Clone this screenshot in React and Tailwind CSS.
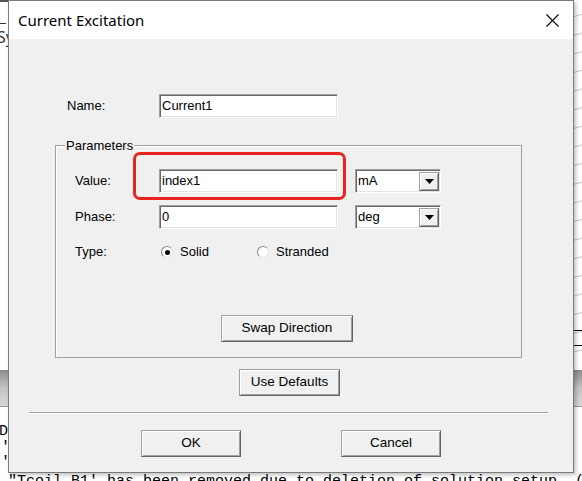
import React from 'react';

const sunken = 'bg-white border border-t-[#a0a0a0] border-l-[#a0a0a0] border-b-white border-r-white shadow-[inset_1px_1px_0_#696969,inset_-1px_-1px_0_#e3e3e3]';
const raised = 'bg-[#f0f0f0] border border-[#a0a0a0] border-r-[#646464] border-b-[#646464] shadow-[inset_1px_1px_0_#fff,inset_-1px_-1px_0_#a0a0a0]';

function TextBox({ value, width = 'w-[179px]' }) {
	return (
		<div className={`${sunken} ${width} h-[24px] flex items-center pl-[2px] text-[13px] text-black`}>
			{value}
		</div>
	);
}

function Combo({ value }) {
	return (
		<div className={`${sunken} w-[86px] h-[24px] flex items-center justify-between pl-[2px] pr-[1px]`}>
			<span className="text-[13px]">{value}</span>
			<div className={`${raised} w-[20px] h-[19px] flex items-center justify-center`}>
				<svg width="9" height="5" viewBox="0 0 9 5"><path d="M0 0h9L4.5 5z" fill="#000" /></svg>
			</div>
		</div>
	);
}

function Radio({ checked, label }) {
	return (
		<div className="flex items-center">
			<div className="w-[12px] h-[12px] rounded-full bg-white border border-[#8a8a8a] border-b-[#e3e3e3] border-r-[#e3e3e3] flex items-center justify-center">
				{checked && <div className="w-[5px] h-[5px] rounded-full bg-black" />}
			</div>
			<span className="ml-[7px] text-[13px]">{label}</span>
		</div>
	);
}

function Button({ children, width, height = 'h-[27px]' }) {
	return (
		<div className={`${raised} ${width} ${height} flex items-center justify-center text-[13.5px] text-black`}>
			{children}
		</div>
	);
}

export default function App() {
	return (
		<div className="relative w-[582px] h-[481px] overflow-hidden bg-white" style={{ fontFamily: '"Liberation Sans", Arial, sans-serif' }}>
			{/* backdrop: the main app behind the dialog */}
			<div className="absolute left-0 top-0 w-[582px] h-[2px] bg-[#555]" />
			<div className="absolute left-0 top-[23px] w-[6px] h-[1px] bg-[#333]" />
			<div className="absolute left-[-3px] top-[29px] text-[16px] leading-none text-[#333]" style={{ fontFamily: '"Noto Sans", sans-serif' }}>Sy</div>
			<div className="absolute right-0 top-0 w-[12px] h-[360px] bg-[repeating-linear-gradient(165deg,#fff_0px,#fff_16px,#c8c8c8_17px,#fff_18px)]" />
			<div className="absolute right-0 top-[330px] w-[12px] h-[1px] bg-black" />
			<div className="absolute right-0 top-[345px] w-[12px] h-[1px] bg-black" />
			<div className="absolute left-0 top-[370px] w-[582px] h-[36px] bg-gradient-to-b from-[#8c8c8c] via-[#c4c4c4] to-[#d8d8d8]" />
			<div className="absolute left-0 top-[406px] w-[582px] h-[1px] bg-[#999]" />
			<div className="absolute left-[-1px] top-[424px] text-[15px] leading-none" style={{ fontFamily: '"Liberation Mono", monospace' }}>De</div>
			<div className="absolute left-[1px] top-[440px] text-[15px] leading-none" style={{ fontFamily: '"Liberation Mono", monospace' }}>',</div>
			<div className="absolute left-[1px] top-[455px] text-[15px] leading-none" style={{ fontFamily: '"Liberation Mono", monospace' }}>',</div>
			<div className="absolute left-[8px] top-[474px] whitespace-nowrap text-[15px] leading-none" style={{ fontFamily: '"Liberation Mono", monospace' }}>
				"Tcoil_B1' has been removed due to deletion of solution setup. (Circuit
			</div>

			{/* dialog window */}
			<div className="absolute left-[8px] top-0 w-[566px] h-[473px] bg-[#f0f0f0] border border-[#7a7a7a] shadow-[2px_2px_4px_rgba(0,0,0,0.25)] flex flex-col">
				<div className="h-[38px] bg-white flex items-center justify-between pl-[9px] pr-[14px] shrink-0">
					<span className="text-[15px] text-black" style={{ fontFamily: '"Noto Sans", "Open Sans", sans-serif' }}>Current Excitation</span>
					<svg width="13" height="13" viewBox="0 0 13 13">
						<path d="M0.5 0.5l12 12M12.5 0.5l-12 12" stroke="#000" strokeWidth="1.1" />
					</svg>
				</div>

				<div className="flex flex-col text-[13px] text-black">
					{/* name row */}
					<div className="mt-[55px] flex items-center pl-[58px]">
						<span className="w-[92px]">Name:</span>
						<TextBox value="Current1" />
					</div>

					{/* parameters group */}
					<div className="relative mt-[27px] ml-[46px] w-[467px] h-[213px] border border-[#a0a0a0] shadow-[inset_1px_1px_0_#fff] flex flex-col">
						<span className="absolute -top-[8px] left-[9px] bg-[#f0f0f0] px-[1px] leading-[15px]">Parameters</span>

						<div className="mt-[23px] flex items-center pl-[19px]">
							<span className="w-[84px]">Value:</span>
							<TextBox value="index1" />
							<div className="ml-[17px]"><Combo value="mA" /></div>
						</div>

						<div className="mt-[12px] flex items-center pl-[19px]">
							<span className="w-[84px]">Phase:</span>
							<TextBox value="0" />
							<div className="ml-[17px]"><Combo value="deg" /></div>
						</div>

						<div className="mt-[15px] flex items-center pl-[19px] h-[16px]">
							<span className="w-[86px]">Type:</span>
							<div className="w-[96px]"><Radio checked label="Solid" /></div>
							<Radio label="Stranded" />
						</div>

						<div className="mt-[55px] ml-[165px]">
							<Button width="w-[132px]">Swap Direction</Button>
						</div>

						{/* annotation highlight */}
						<div className="absolute left-[77px] top-[6px] w-[213px] h-[48px] rounded-[7px] border-[3px] border-[#e8241c]" />
					</div>

					<div className="mt-[11px] ml-[230px]">
						<Button width="w-[101px]">Use Defaults</Button>
					</div>

					<div className="mt-[16px] ml-[20px] w-[519px] h-[2px] border-t border-[#a0a0a0] border-b border-b-white" />

					<div className="mt-[16px] flex pl-[132px]">
						<Button width="w-[100px]">OK</Button>
						<div className="ml-[100px]"><Button width="w-[100px]">Cancel</Button></div>
					</div>
				</div>
			</div>
		</div>
	);
}
